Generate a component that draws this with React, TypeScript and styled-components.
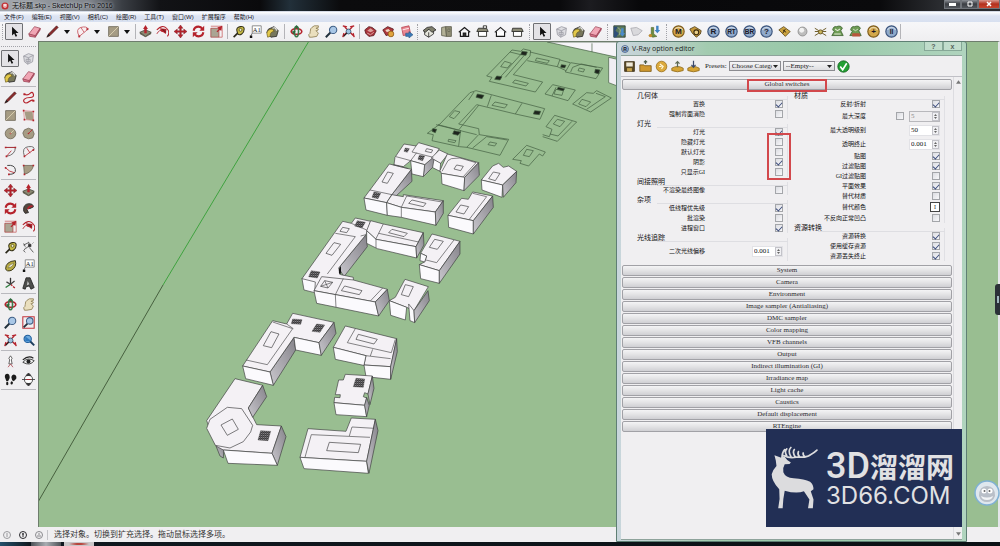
import React from "react";
import styled, { createGlobalStyle } from "styled-components";

const sans = '"Liberation Sans", "Noto Sans CJK SC", sans-serif';
const serif = '"Liberation Serif", "Noto Sans CJK SC", serif';

const GlobalStyle = createGlobalStyle`
  * { box-sizing: border-box; }
  body { margin: 0; overflow: hidden; font-family: ${sans}; color: #222; }
  button, input, select { font: inherit; color: inherit; margin: 0; padding: 0; }
`;

const Window = styled.div`
  position: relative;
  height: 100vh;
  display: flex;
  flex-direction: column;
  background: #f0eff1;
`;

/* ---------- title and menu ---------- */

const TitleBar = styled.header`
  height: 12px;
  flex: none;
  display: flex;
  align-items: center;
  gap: 3px;
  padding-left: 1px;
  border-bottom: 1px solid #d5dbe6;
  background: linear-gradient(90deg, #a3a7ad 0, #7f848b 90px, #3a3e44 122px, #121316 160px, #0a0a0c 260px, #22303a 290px, #0b0b0d 340px, #0a0a0c 560px, #1c1c20 590px, #08080a 640px, #0a0a0c 880px, #2a2c30 940px);
`;

const Title = styled.h1`
  margin: 0;
  flex: 1;
  font-size: 7px;
  line-height: 10px;
  font-weight: 400;
  color: #0c0c0e;
  text-shadow: 0 0 3px #e4e8ee;
  white-space: nowrap;
`;

const WindowButtons = styled.div`
  display: flex;
  align-self: flex-start;
`;

const WindowButton = styled.button<{ $close?: boolean }>`
  width: ${(p) => (p.$close ? 22 : 17)}px;
  height: 9px;
  border: 1px solid #70747a;
  border-top: 0;
  display: grid;
  place-items: center;
  background: ${(p) =>
    p.$close ? "linear-gradient(#d99a90, #b3301d 50%, #c8452e)" : "linear-gradient(#8c9096, #3b3e43 50%, #53575d)"};
`;

const MenuBar = styled.nav`
  height: 10px;
  flex: none;
  display: flex;
  gap: 8px;
  padding-left: 4px;
  background: linear-gradient(#ffffff, #dde4f3 40%, #d8e0f0);
`;

const MenuItem = styled.button`
  border: 0;
  background: none;
  font-size: 6px;
  line-height: 9px;
  color: #16161c;
  white-space: nowrap;
`;

/* ---------- tool bars ---------- */

const ToolBar = styled.div`
  height: 19px;
  flex: none;
  display: grid;
  grid-template-columns: 5px 127px 6px 85px 8px 48px 10px 67px 7px 50px 9px 103px 8px 69px 10px 49px 10px 227px 5px;
  align-items: center;
  background: linear-gradient(#f7f7f9, #efeef0);
`;

const Tools = styled.div`
  display: flex;
  justify-content: space-between;
  align-items: center;
`;

const Split = styled.div`
  display: flex;
  align-items: center;
  gap: 2px;
`;

const Tool = styled.button<{ $active?: boolean }>`
  width: ${(p) => (p.$active ? 18 : 14)}px;
  height: ${(p) => (p.$active ? 17 : 14)}px;
  border: ${(p) => (p.$active ? "1px solid #6f7074" : "0")};
  border-radius: 1px;
  background: ${(p) => (p.$active ? "#e3e2e6" : "none")};
  display: grid;
  place-items: center;
  svg { display: block; width: 13px; height: 13px; }
`;

const CaretButton = styled.button`
  width: 10px;
  height: 14px;
  border: 0;
  background: none;
  display: grid;
  place-items: center;
`;

const Divider = styled.span`
  justify-self: center;
  width: 1px;
  height: 15px;
  background: #b4b4b8;
`;

const Grip = styled.span`
  justify-self: center;
  width: 1px;
  height: 16px;
  border-left: 1px dotted #a2a2a8;
`;

const Main = styled.div`
  flex: 1;
  min-height: 0;
  display: flex;
`;

const Palette = styled.aside`
  width: 38px;
  flex: none;
  padding: 5px 2px 0 1px;
`;

const PaletteGrip = styled.div`
  height: 2px;
  border-top: 1px dotted #a2a2a8;
`;

const PaletteGroup = styled.div`
  display: grid;
  grid-template-columns: 18px 18px;
  grid-auto-rows: 14px;
  row-gap: 4px;
  padding: 3px 0;
  place-items: center;
  border-bottom: 1px solid #b9b9be;
`;

const Viewport = styled.main`
  flex: 1;
  min-width: 0;
  border: solid #6e7d6d;
  border-width: 1px 0 0 1px;
  border-right: 2px solid #e4e6ea;
  background: #99be91;
  svg { display: block; width: 100%; height: 100%; }
`;

const StatusBar = styled.footer`
  height: 15px;
  flex: none;
  display: flex;
  align-items: center;
  gap: 6px;
  padding-left: 2px;
  font-size: 8px;
  line-height: 12px;
  color: #333;
  svg { width: 10px; height: 10px; }
`;

const StatusIcons = styled.div`
  display: flex;
  gap: 6px;
  padding-right: 3px;
  height: 10px;
  border-right: 1px solid #c4c4c8;
`;

const TaskBar = styled.div`
  height: 4px;
  flex: none;
  display: flex;
  gap: 3px;
  padding-left: 31px;
  background: linear-gradient(90deg, #24506b, #10181f 30px, #0b1014);
`;

const Task = styled.span<{ $lit?: boolean }>`
  width: 30px;
  background: ${(p) => (p.$lit ? "radial-gradient(#b8453c 20%, #c9c6c8 50%)" : "linear-gradient(90deg, #4d5257, #a9adb2, #4d5257)")};
`;

/* ---------- options dialog ---------- */

const Dialog = styled.section`
  position: absolute;
  top: 41px;
  right: 33px;
  bottom: 4px;
  width: 351px;
  display: flex;
  flex-direction: column;
  padding: 0 4px 1px;
  border: 1px solid #5f7f74;
  border-radius: 3px 3px 0 0;
  background: linear-gradient(90deg, #c9d6dc, #b9cfc8 50px, #a3cbb0 90px, #98c8a8 200px, #b0d4be);
  font-family: ${serif};
  font-size: 7px;
  line-height: 9px;
`;

const DialogTitle = styled.div`
  height: 13px;
  flex: none;
  display: flex;
  justify-content: space-between;
`;

const DialogName = styled.h2`
  margin: 0;
  display: flex;
  align-items: center;
  gap: 3px;
  font: 400 7px/12px "Open Sans", ${sans};
  color: #1c2622;
`;

const DialogButton = styled.button`
  width: 19px;
  height: 9px;
  border: 1px solid #86a897;
  border-top: 0;
  background: rgba(255, 255, 255, 0.25);
  font: 700 7px/7px ${sans};
  color: #56635c;
`;

const Client = styled.div`
  flex: 1;
  min-height: 0;
  display: flex;
  flex-direction: column;
  background: #f0eff1;
  border: 1px solid #8ea39b;
  border-width: 1px 0;
`;

const DialogTools = styled.div`
  height: 21px;
  flex: none;
  display: flex;
  align-items: center;
  gap: 2px;
  padding-left: 1px;
  border-bottom: 1px solid #c0c0c6;
  label { padding-left: 3px; }
`;

const SelectBox = styled.span`
  display: grid;
  align-items: center;
  svg, select { grid-area: 1 / 1; }
  svg { justify-self: end; margin-right: 3px; pointer-events: none; }
`;

const Select = styled.select`
  appearance: none;
  width: 52px;
  height: 10px;
  padding: 0 8px 0 2px;
  border: 1px solid #8b8b90;
  background: linear-gradient(#f6f6f7, #dddde0);
  line-height: 8px;
`;

const ScrollArea = styled.div`
  flex: 1;
  min-height: 0;
  display: grid;
  grid-template-columns: 1fr 9px;
`;

const Accordion = styled.div`
  display: flex;
  flex-direction: column;
  gap: 1px;
  padding: 2px 1px 0;
`;

const SectionButton = styled.button`
  position: relative;
  height: 11px;
  flex: none;
  border: 1px solid #a1a1a6;
  border-radius: 2px;
  background: linear-gradient(#f4f4f5, #e3e3e5 50%, #cfcfd3);
  color: #2c2c30;
  line-height: 9px;
`;

const HeaderMark = styled.span`
  position: absolute;
  left: 50%;
  top: -1px;
  width: 80px;
  height: 13px;
  margin-left: -40px;
  border: 2px solid #d2484c;
`;

const CheckMark = styled.span`
  position: absolute;
  right: -3px;
  top: 6px;
  width: 24px;
  bottom: -3px;
  border: 2px solid #d2484c;
  pointer-events: none;
`;

const ScrollBar = styled.div`
  display: flex;
  flex-direction: column;
  justify-content: space-between;
  align-items: center;
  border-left: 1px solid #dcdce0;
  padding: 3px 0;
  svg { width: 5px; height: 4px; }
`;

const Switches = styled.div`
  display: grid;
  grid-template-columns: 157px 153px;
  column-gap: 4px;
  padding: 2px 0 3px 9px;
`;

const Column = styled.div`
  display: flex;
  flex-direction: column;
  gap: 2px;
`;

const Group = styled.fieldset`
  position: relative;
  margin: 0;
  padding: 0;
  border: 0;
  min-width: 0;
  background:
    linear-gradient(#dedee2, #dedee2) 26px 3px / 100% 1px no-repeat,
    linear-gradient(#e0e0e4, #e0e0e4) right bottom / 1px 100% no-repeat;
`;

const Legend = styled.legend<{ $inset: number }>`
  height: 6px;
  padding: 0;
  margin-left: ${(p) => p.$inset}px;
  line-height: 6px;
  font-size: 7px;
  color: #111;
`;

const Row = styled.div<{ $h: number }>`
  height: ${(p) => p.$h}px;
  display: grid;
  grid-template-columns: 74px 1fr;
  align-items: center;
  padding-right: 5px;
  label {
    justify-self: end;
    font-size: 6px;
    line-height: 8px;
    white-space: nowrap;
    color: #111;
  }
`;

const Controls = styled.div`
  display: flex;
  justify-content: flex-end;
  align-items: center;
  gap: 5px;
`;

const Check = styled.input`
  appearance: none;
  width: 8px;
  height: 8px;
  border: 1px solid #a4a6aa;
  background: linear-gradient(135deg, #dcdde2, #f8f8fa);
  display: grid;
  place-items: center;
  &:checked::after {
    content: "";
    width: 5px;
    height: 3px;
    border: solid #3c4c7c;
    border-width: 0 0 1px 1px;
    transform: rotate(-48deg);
  }
`;

const Spin = styled.div<{ $off?: boolean }>`
  width: 31px;
  height: 11px;
  display: flex;
  border: 1px solid ${(p) => (p.$off ? "#b8b8bc" : "#e2e2e6")};
  background: ${(p) => (p.$off ? "#eeedef" : "#fff")};
  color: ${(p) => (p.$off ? "#888" : "#111")};
  input {
    flex: 1;
    min-width: 0;
    width: 10px;
    border: 0;
    padding-left: 1px;
    background: none;
    line-height: 9px;
  }
`;

const Stepper = styled.button`
  width: 7px;
  border: 1px solid #c3c3c9;
  background: #f0f0f3;
  display: grid;
  place-items: center;
  svg { width: 5px; height: 7px; display: block; }
`;

const Swatch = styled.button`
  width: 10px;
  height: 10px;
  border: 1px solid #444;
  background: #fff;
  font-size: 6px;
  line-height: 6px;
`;

/* ---------- floating badges ---------- */

const Watermark = styled.div`
  position: absolute;
  right: 38px;
  bottom: 19px;
  width: 196px;
  height: 98px;
  display: flex;
  align-items: center;
  gap: 7px;
  padding-left: 5px;
  background: #222f55;
  color: #e1e1e3;
  svg { width: 48px; height: 66px; flex: none; }
`;

const BrandText = styled.div`
  display: flex;
  flex-direction: column;
  white-space: nowrap;
`;

const BrandName = styled.div`
  display: flex;
  align-items: center;
  height: 36px;
  font: 700 28px/36px "Noto Sans CJK SC", sans-serif;
  b { font: 500 36px/36px Roboto, sans-serif; }
`;

const BrandUrl = styled.div`
  font: 400 24px/24px Inter, sans-serif;
`;

const Mascot = styled.div`
  position: absolute;
  right: 0;
  bottom: 40px;
  width: 26px;
  height: 26px;
  svg { display: block; }
`;

const SideTab = styled.div`
  position: absolute;
  right: 0;
  top: 284px;
  width: 5px;
  height: 31px;
  border-radius: 3px 0 0 3px;
  background: #2b3138;
  display: grid;
  place-items: center;
  &::after { content: ""; width: 2px; height: 7px; background: #9fb6bd; }
`;

/* ---------- icons ---------- */

const RED = "#b5232c";
const TAN = "#a69c84";
const DK = "#2b2a2a";

const Ball = ({ c, t }: { c: [string, string]; t: string }) => (
  <>
    <circle cx="8" cy="8" r="7" fill={c[0]} stroke={c[1]} strokeWidth="1.4" />
    <path d="M3 6a5.5 5.5 0 0 1 10 0" stroke="#fff" strokeOpacity=".5" strokeWidth="1.5" fill="none" />
    <text x="8" y="11.3" textAnchor="middle" fontSize={t.length > 1 ? 8 : 10} fontWeight="700" fill="#1c1a26" fontFamily="Liberation Sans">{t}</text>
  </>
);
const GOLD: [string, string] = ["#d3a84a", "#7e5c1c"];
const BLUE: [string, string] = ["#8fa9cb", "#3c557d"];

const icons: Record<string, React.ReactNode> = {
  select: <path d="M5 2v11l2.6-2.4L9.4 14.500l1.900-.9-1.900-3.700H13z" fill="#111" />,
  component: <g fill="#dcdce0" stroke="#9a9aa2"><path d="M2 5l6-3 6 2-1 8-6 3-4-3z" /><path d="M2 5l6 2 6-3M8 7l-1 8M5 9h5v3H5z" fill="none" /></g>,
  paint: <g><path d="M3 5l7-3 5 5-2 7-7 1-5-6z" fill="#77775c" stroke={DK} /><path d="M1 10q1-5 7-5l2 3q-5 0-5 6l-3 1z" fill="#e2c84a" stroke="#67591c" strokeWidth=".8" /><path d="M8 4q4-2 5 3" stroke="#eee" fill="none" strokeWidth="1.300" /></g>,
  eraser: <g stroke="#9b4657" strokeWidth=".9"><path d="M1 11l7-9 7 2-6 10z" fill="#f0a5b4" /><path d="M1 11l8 2v2l-7-1z" fill="#d67388" /><path d="M9 13l6-9v2l-6 9z" fill="#c65f76" /></g>,
  pencil: <g><path d="M1 15l2-4L13 1l2 2L5 13z" fill="#8b2a2a" stroke="#3e1b1b" strokeWidth=".7" /><path d="M1 15l2-4 2 2z" fill="#1e1e1e" /></g>,
  freehand: <g fill="none" stroke={RED} strokeWidth="1.400"><path d="M3 4q4 2 7-1t4 1-4 4-7 2 0 4 6-1 5-1" /><path d="M2 3h2v2H2zM13 11h2v2h-2z" fill={RED} strokeWidth=".5" /></g>,
  rect: <g><path d="M2 2h12v12H2z" fill={TAN} stroke="#6e6857" /><path d="M2 14L14 2" stroke="#e3d7b8" /></g>,
  rotrect: <g><path d="M3 3h10l1 11-9-1z" fill={TAN} /><path d="M2 2l12 1v12M2 2l1 11 11 1" stroke="#d07a7a" fill="none" strokeWidth=".8" /><path d="M1 1h2v2H1zM13 2h2v2h-2zM13 13h2v2h-2zM2 12h2v2H2z" fill={RED} /></g>,
  circle: <g><circle cx="8" cy="8" r="6.500" fill={TAN} stroke="#6e6857" /><circle cx="8" cy="8" r="1" fill={RED} /><path d="M8 8l4-4" stroke="#e8dcb8" /></g>,
  polygon: <g><path d="M8 1.500l5 2 2 5-2 5-5 1-5-2-2-5 2-4z" fill={TAN} stroke="#6e6857" /><path d="M8 8l5-5" stroke={RED} /><circle cx="8" cy="8" r="1" fill={RED} /></g>,
  arc: <g fill="none"><path d="M2 3h12Q14 12 3 14" stroke="#555" /><path d="M2 3h12M3 14l6-7" stroke={RED} /><path d="M1 2h2v2H1zM13 2h2v2h-2zM2 13h2v2H2z" fill={RED} /></g>,
  arc2: <g fill="none"><path d="M3 14Q-1 3 8 2t6 5" stroke="#555" /><path d="M3 14L14 6M6 4l4 6" stroke={RED} /><path d="M2 13h2v2H2zM13 5h2v2h-2z" fill={RED} /></g>,
  arcBar: <g fill="none" stroke="#c45059"><path d="M4 14Q-1 5 6 3t9 2z" fill="#f8eef0" /><path d="M6 3l4 6" /><path d="M3 13h2v2H3zM13 4h2v2h-2z" fill={RED} strokeWidth=".4" /></g>,
  arc3: <g fill="none"><path d="M4 3q9-1 10 5t-8 6" stroke="#444" strokeWidth="1.200" /><path d="M2 6l5 4 6 2" stroke={RED} /><path d="M1 5h2v2H1zM5 13h2v2H5z" fill={RED} /></g>,
  pie: <g><path d="M2 3h12q-1 8-11 11z" fill={TAN} stroke="#6e6857" /><path d="M1 2h2v2H1zM13 2h2v2h-2zM2 13h2v2H2z" fill={RED} /></g>,
  move: <g fill={RED} stroke="#7b161d" strokeWidth=".5"><path d="M8 0l3 4H9v3h3V5l4 3-4 3V9H9v3h2l-3 4-3-4h2V9H4v2L0 8l4-3v2h3V4H5z" /></g>,
  push: <g><path d="M1 9l7-3 7 3-7 5z" fill="#8c8a72" stroke="#45453a" /><path d="M1 9v2l7 4 7-4V9l-7 5z" fill="#5f5d4c" /><path d="M8 0l3 5H9.500v5h-3V5H5z" fill={RED} /></g>,
  rotate: <g fill="none" stroke={RED} strokeWidth="2.600"><path d="M2 7q1-5 6-5 3 0 5 3M14 9q-1 5-6 5-3 0-5-3" /><path d="M15 1v6H9zM1 15V9h6z" fill={RED} stroke="none" /></g>,
  follow: <g><path d="M2 11Q1 3 8 2q6 0 6 4l-4 2q-3-1-4 1l2 4-4 1z" fill="#54483f" stroke="#222" /><path d="M7 9q1-4 6-4" stroke={RED} strokeWidth="2" fill="none" /></g>,
  scale: <g><path d="M1 4h10v11H1z" fill="#aaa593" stroke="#a33" strokeWidth=".8" /><path d="M1 1.500h14V15h-4" fill="none" stroke="#cc6a6a" /><path d="M8 8l3-3-2-2 6-2-1 6-2-1-3 3z" fill={RED} /></g>,
  offset: <g fill="none"><path d="M1 6Q8-1 13 4t1 10" stroke={RED} strokeWidth="1.300" /><path d="M1 11q3-6 8-4" stroke={RED} /><path d="M5 4l8 1-1 6-3-2-3-1z" fill={RED} /><path d="M8 5l4 4" stroke="#3a1a1a" /></g>,
  tape: <g><path d="M6 7q-1-4 4-5t5 3-3 6-5 0z" fill="#c8bb45" stroke="#37331a" strokeWidth="1.300" /><circle cx="10.500" cy="6" r="1.800" fill="#f5f2d3" stroke="#55511e" /><path d="M7 10l-5 5" stroke="#2a281a" strokeWidth="2" /></g>,
  dim: <g stroke="#444" fill="none"><path d="M2 5l6-3M2 3l2 4M8 1l1 3M5 9l6-5M9 8l5 6M4 14l-2-2 3-4" /><path d="M8 4h3v3H8zM13 3l1-1" fill={DK} /></g>,
  protractor: <g><path d="M2 12Q2 3 14 2q2 8-5 12-6 2-7-2z" fill="#b7aa43" stroke="#39351a" strokeWidth="1.200" /><path d="M5 11q1-4 7-6-1 5-7 6z" fill="#f2f0e6" stroke="#6d6629" strokeWidth=".7" /></g>,
  text: <g><path d="M4 1h11v9H4z" fill="#fff" stroke="#777" /><path d="M4 10l-2 4" stroke="#555" /><path d="M1 13h3v3H1z" fill="#111" /><text x="9.500" y="8.500" textAnchor="middle" fontSize="8" fontFamily="Liberation Serif" fill="#222">A1</text></g>,
  axes: <g strokeWidth="1.600" fill="none"><path d="M8 9V1" stroke="#333" /><path d="M8 9l6 5" stroke={RED} strokeDasharray="3 1" /><path d="M8 9l-6 4" stroke="#2a7a3a" /><path d="M3 6l5 3 5-4" stroke="#444" /></g>,
  text3d: <g><path d="M5 1l5 0 5 12-4 2-2-4-4 1-1 3-3-1z" fill="#4e4e4c" stroke="#222" /><path d="M7 5l2 4-3 1z" fill="#ccc" /></g>,
  orbit: <g fill="none" strokeWidth="2"><ellipse cx="8" cy="8" rx="6.500" ry="3.500" stroke={RED} /><ellipse cx="8" cy="8" rx="2.500" ry="6.500" stroke="#3c7a4b" /><path d="M8 0l3 4H6zM2 8l5-1-2 5z" fill="#2f6a3d" stroke="none" /></g>,
  pan: <path d="M2 12q2-1 2-4 0-4 2-5l3-2 5 0 0 2-3 1 3 1-1 2-2 0 3 3-2 4-6 1-3 0z" fill="#eadfbe" stroke="#8d7d50" />,
  zoom: <g><path d="M7 9l-6 6" stroke="#22303c" strokeWidth="2.400" /><circle cx="10" cy="6" r="4.500" fill="#a9c7e6" stroke="#3f5f86" strokeWidth="1.300" /></g>,
  zoomwin: <g><path d="M1 1h14v14H1z" fill="none" stroke="#c2353d" strokeWidth="1.300" /><path d="M7 9l-5 5" stroke="#22303c" strokeWidth="2.200" /><circle cx="9.500" cy="6" r="4" fill="#a9c7e6" stroke="#3f5f86" strokeWidth="1.300" /></g>,
  extents: <g><path d="M1 1l4 1-1 1 3 3M15 1l-4 1 1 1-3 3M1 15l1-4 1 1 4-4M15 15l-1-4-1 1-4-4" stroke={RED} strokeWidth="1.600" fill={RED} /><circle cx="8" cy="8" r="3" fill="#9cc1dd" stroke="#32536f" /><path d="M6 10l-4 4" stroke="#222" strokeWidth="1.500" /></g>,
  prev: <g><circle cx="7" cy="6" r="4.500" fill="#6fa9dc" stroke="#1f5d9c" strokeWidth="1.300" /><path d="M10 9l5 5" stroke="#1c3c5c" strokeWidth="2.400" /><path d="M4 9l0-6 8 6z" fill="#2f79bf" /></g>,
  position: <g fill="none" stroke="#b34952"><path d="M8 1l2 3-1 2 1 5H6l1-5-1-2z" fill="#fff" stroke="#333" strokeWidth=".9" /><path d="M5 15l3-4 3 4" /></g>,
  look: <g><path d="M1 9q6-7 14-2-5 7-14 2z" fill="#f0f0f0" stroke="#222" /><circle cx="8" cy="8" r="2.500" fill="#222" /><path d="M1 6q7-6 13-2" stroke="#222" strokeWidth="1.600" fill="none" /></g>,
  walk: <g fill="#1b1b1b"><path d="M1 5q0-4 3-4t3 5l-2 4H3z" /><path d="M3 11l2 0q1 4-1 4t-1-4z" /><path d="M9 5q1-4 4-3t2 5l-3 3-2-1z" /><path d="M9 10l2 1q0 4-2 3t0-4z" /></g>,
  section: <g fill="#fff" stroke="#333"><circle cx="8" cy="8" r="5" /><path d="M0 8h16M5 3l3-3 3 3zM5 13l3 3 3-3z" fill="#333" /><path d="M5 8h6" stroke={RED} /></g>,
  get: <g><path d="M1 6l5-4 4 1 5 4-3 6-6 1-4-4z" fill="#a8333a" stroke="#571a1e" /><path d="M4 7l4-3 4 3-4 2z" fill="#dda19c" /><path d="M4 10l4 2 4-3" stroke="#e7c0b9" /></g>,
  share: <g><path d="M1 6l6-4 7 3-2 6-7 2z" fill="#b0383c" stroke="#571a1e" /><circle cx="11" cy="11" r="3.500" fill="#e2a43c" stroke="#8d5b18" /><path d="M4 6l4-1 2 2-4 2z" fill="#eed6c2" /></g>,
  send: <g><path d="M2 3l9-2 2 10-9 2z" fill="#e98893" stroke="#b8404e" /><path d="M7 10h4V8l5 4-5 4v-2H7z" fill="#3c79b6" stroke="#1e4a78" strokeWidth=".6" /><path d="M3 6l8-2" stroke="#fff" /></g>,
  iso: <g stroke={DK} fill="#e6e6dc"><path d="M2 8v4l5 3 6-4V7l-5-2z" /><path d="M0 7l5-4 6-1 5 4-5 3-4-4-4 4z" fill="#7f7f6d" /><path d="M7 9v6" /></g>,
  top: <g stroke="#5c5c4b"><path d="M2 3l5-1 1 12-6-1z" fill="#b3b197" /><path d="M7 2h7v12H8z" fill="#8f8d75" /><path d="M10 5h2v3h-2z" fill="#d6d4bb" /></g>,
  front: <g fill="#fff" stroke="#1c1c1c" strokeWidth="1.500"><path d="M3 8v6h10V8" /><path d="M1 9l7-6 7 6" fill="none" /><path d="M6.500 14v-4h3v4" fill="#333" /></g>,
  right: <g fill="#fff" stroke="#3b3b36" strokeWidth="1.200"><path d="M3 8h10v6H3z" /><path d="M1 8l2-4h10l2 4z" fill="#8c8b77" /><path d="M9 1h4v3H9z" /></g>,
  back: <g fill="#fff" stroke="#1c1c1c" strokeWidth="1.400"><path d="M3 8v6h10V8" /><path d="M1 9l7-6 7 6" fill="none" /></g>,
  left: <g fill="#fff" stroke="#3b3b36" strokeWidth="1.200"><path d="M3 8h10v6H3z" /><path d="M1 8l1-4h11l2 4z" fill="#8c8b77" /></g>,
  map: <g><path d="M1 1h14v14H1z" fill="#5d7a5c" stroke="#26382b" /><path d="M1 2h5l-3 5 4 3-3 5H1z" fill="#2f4f78" /><path d="M6 3l3 3-1 6" stroke="#b7c79c" fill="none" /><path d="M10 4h3v6h2l-3.500 4L8 10h2z" fill="#4b8bcb" /></g>,
  terrain: <path d="M1 4l7-1 7 4-5 5-6 1z" fill="#d9d9dc" stroke="#aaaab0" />,
  geo: <g><path d="M1 13l3-2V3h3v8l4 3-5 1z" fill="#6d8d3f" stroke="#4a5f28" strokeWidth=".7" /><path d="M10 1h3v5h2l-3.500 4L8 6h2z" fill="#4184c4" /><circle cx="3" cy="13" r="2" fill="#c78b2d" /></g>,
  m: <Ball c={GOLD} t="M" />,
  r: <Ball c={BLUE} t="R" />,
  rt: <Ball c={BLUE} t="RT" />,
  br: <Ball c={BLUE} t="BR" />,
  help: <Ball c={BLUE} t="?" />,
  plus: <Ball c={GOLD} t="+" />,
  pause: <Ball c={BLUE} t="II" />,
  gear: <g><path d="M1 5l6-3 8 5-1 4-5 4-5-5z" fill="#c69a3c" stroke="#4c3a14" /><circle cx="9" cy="9" r="3" fill="#e9cf8a" stroke="#3c2c10" strokeWidth="1.400" /></g>,
  tag: <g><path d="M1 6l6-4 8 6-6 6z" fill="#cda43f" stroke="#5c4718" /><path d="M6 6l4 3M9 5l-3 5" stroke="#3a2b10" strokeWidth="1.200" /></g>,
  sphere: <g><circle cx="8" cy="8" r="5.500" fill="#bdbdbd" stroke="#8b8b8b" /><circle cx="7" cy="6.500" r="3" fill="#f2f2f2" /></g>,
  light: <g stroke="#6e5d2a" strokeWidth="1.200"><path d="M1 4l5 3M15 4l-5 3M1 13l5-3M15 13l-5-3M1 8h14" /><circle cx="8" cy="8.500" r="2.500" fill="#c9b55a" /></g>,
  tree: <g><path d="M2 6q1-5 5-4 5-2 7 2l-2 3 3 6H1l3-5z" fill="#6e9c55" stroke="#3f6431" /><path d="M5 5l3 2 3-2M4 11h8" stroke="#e3ead8" strokeWidth="1.300" fill="none" /></g>,
  treeRed: <g><path d="M2 6q1-5 5-4 5-2 7 2l-2 3 3 6H1l3-5z" fill="#6e9c55" stroke="#3f6431" /><path d="M5 5l3 2 3-2" stroke="#e3ead8" fill="none" /><path d="M4 10h9l1 4H4z" fill="#b9553c" /></g>,
  save: <g><path d="M2 2h12v12H2z" fill="#5b4a24" stroke="#3b2f15" /><path d="M4 3h8v5H4z" fill="#efe9d8" /><path d="M5 10h6v4H5z" fill="#c9a44c" /></g>,
  open: <g><path d="M1 6h5l1 1h8v7H1z" fill="#d0982f" stroke="#7d5a17" /><path d="M8 5V1M6 3l2-2 2 2" stroke="#4b5c49" strokeWidth="1.500" fill="none" /></g>,
  reset: <g><circle cx="8" cy="8" r="6.500" fill="#dba93c" stroke="#9a701c" /><path d="M6 5l4 3-2 3M5 8h3" stroke="#fff6da" strokeWidth="1.500" fill="none" /></g>,
  up: <g><path d="M1 10q7-4 14 0v3q-7 3-14 0z" fill="#d6a535" stroke="#8f6919" /><path d="M8 9V2M5.500 4.500L8 2l2.500 2.500" stroke="#5f6a52" strokeWidth="1.500" fill="none" /></g>,
  down: <g><path d="M1 10q7-4 14 0v3q-7 3-14 0z" fill="#d6a535" stroke="#8f6919" /><path d="M8 1v7M5.500 6L8 9l2.500-3" stroke="#3c4a6a" strokeWidth="1.500" fill="none" /></g>,
  ok: <g><circle cx="8" cy="8" r="7" fill="#23a033" stroke="#145e1e" /><path d="M4 8l3 4 5-8" stroke="#fff" strokeWidth="2" fill="none" /></g>,
  logo: <g><circle cx="8" cy="8" r="7" fill="#c32f33" /><path d="M4 6l4-2 4 2-4 2zM4 9l4 2 4-2" fill="#fff" stroke="#fff" /></g>,
};

const Icon = ({ n, s = 14 }: { n: string; s?: number }) => (
  <svg viewBox="0 0 16 16" width={s} height={s} fill="none" aria-hidden="true">{icons[n]}</svg>
);

const ToolSet = ({ names, active }: { names: string[]; active?: string }) => (
  <>
    {names.map((n, i) => (
      <Tool key={n + i} $active={n === active} aria-label={n}><Icon n={n} /></Tool>
    ))}
  </>
);

const Caret = () => (
  <CaretButton aria-label="more">
    <svg width="6" height="4" viewBox="0 0 6 4"><path d="M0 0h6L3 4z" fill="#111" /></svg>
  </CaretButton>
);

/* ---------- model ---------- */

/* Face kinds: t roof, f lit wall, s shaded wall, n closed outline, l open line, k hatched block */
type Face = [string, string];
const fills: Record<string, string> = { t: "#f4f1f5", f: "#fbfafd", s: "url(#shade)", n: "none", k: "url(#hatch)" };
const Faces = ({ list }: { list: Face[] }) => (
  <>
    {list.map(([kind, pts], i) =>
      kind === "l" ? (
        <polyline key={i} points={pts} fill="none" stroke="#4a4a4c" strokeWidth={2} />
      ) : (
        <polygon key={i} points={pts} fill={fills[kind]} stroke={kind === "k" ? "#333" : "#3c3c3e"} strokeWidth={kind === "k" ? 1 : 2} />
      )
    )}
  </>
);

const lower: Face[] = [
  ["s", "240,216 312,112 317,150 250,256"],
  ["t", "158,198 248,62 290,72 308,40 432,67 387,128 312,112 240,216"],
  ["f", "158,198 240,216 250,256 167,236"],
  ["f", "312,112 387,128 394,166 317,150"],
  ["s", "387,128 432,67 438,100 394,166"],
  ["l", "168,180 232,194 308,86 248,66"],
  ["l", "290,72 310,86"],
  ["n", "243,95 267,102 245,143 220,137"],
  ["k", "380,72 404,75 390,97 366,94"],
  ["k", "308,57 336,59 332,73 304,71"],
  ["t", "430,142 466,78 620,116 602,200 522,195 528,167"],
  ["f", "430,142 528,167 522,196 520,196 436,178"],
  ["f", "522,195 602,200 602,238 528,230"],
  ["s", "602,200 620,116 622,155 602,238"],
  ["l", "496,86 472,128 604,158 616,118"],
  ["l", "528,167 602,176"],
  ["l", "548,148 541,168"],
  ["n", "505,103 562,118 552,132 498,118"],
  ["t", "432,308 434,292 450,293 451,284 436,284 446,240 460,240 466,223 547,228 534,282 524,278 520,290 530,294 524,316"],
  ["f", "432,308 524,316 530,350 438,344"],
  ["s", "524,316 530,292 538,316 530,350"],
  ["s", "534,282 547,228 552,265 540,314"],
  ["k", "498,235 524,237 520,262 490,260"],
  ["t", "330,472 354,386 468,394 484,354 556,358 530,484"],
  ["f", "330,472 530,484 535,520 342,506"],
  ["s", "530,484 556,358 564,392 537,520"],
  ["l", "345,472 364,404 540,412"],
  ["l", "478,408 486,381 552,385"],
  ["n", "418,427 512,433 505,458 410,452"],
  ["s", "78,438 102,440 100,474 90,468"],
  ["t", "50,362 135,236 218,256 175,324 200,374 274,378 246,460 100,450 78,438"],
  ["s", "218,256 230,290 188,352 175,324"],
  ["s", "274,378 288,410 262,496 246,460"],
  ["f", "100,450 246,460 262,496 114,490"],
  ["t", "60,358 112,322 155,326 188,376 182,396 160,425 120,444 76,436 50,385"],
  ["n", "93,375 127,357 145,388 112,406"],
  ["k", "212,392 242,394 234,422 204,420"],
];

const middle: Face[] = [
  ["s", "364,118 366,154 318,198 304,196"],
  ["f", "424,84 452,98 450,124 426,112"],
  ["s", "404,104 434,76 428,112 400,140"],
  ["t", "315,82 342,42 378,48 386,38 448,56 430,82 404,104 362,92 340,110 312,104"],
  ["t", "424,84 448,60 474,72 452,100"],
  ["f", "362,92 404,104 400,140 366,132"],
  ["l", "378,48 366,66 430,82"],
  ["l", "362,92 380,68"],
  ["l", "318,80 348,88 362,92"],
  ["k", "388,76 404,78 398,92 384,88"],
  ["k", "346,54 358,56 352,67 342,64"],
  ["n", "410,56 428,60 424,68 406,64"],
  ["t", "222,204 298,102 364,118 304,196 290,218"],
  ["f", "222,204 290,218 292,256 228,240"],
  ["l", "240,180 306,194"],
  ["l", "308,104 355,116"],
  ["n", "293,126 310,130 292,160 276,156"],
  ["k", "252,186 272,190 264,206 246,202"],
  ["t", "290,218 306,194 340,200 340,194 460,212 436,246 334,232"],
  ["f", "290,218 334,232 436,246 438,286 334,262 292,256"],
  ["s", "436,246 460,212 460,250 438,286"],
  ["l", "334,262 334,232 350,198 456,216"],
  ["n", "366,210 408,220 400,230 356,220"],
  ["t", "450,122 472,72 566,98 524,142 454,130"],
  ["f", "454,130 524,142 522,182 456,162"],
  ["s", "524,142 566,98 568,136 522,182"],
  ["l", "456,124 474,92 484,86 510,84 558,98 520,140"],
  ["n", "500,105 520,109 512,122 492,117"],
  ["t", "574,150 608,108 626,100 640,112 656,108 680,124 638,165"],
  ["f", "574,150 638,165 636,202 576,180"],
  ["s", "638,165 680,124 678,158 640,202"],
  ["n", "610,126 630,130 616,152 596,146"],
  ["t", "474,256 515,205 535,208 548,186 608,198 550,272"],
  ["f", "474,256 550,272 550,312 476,292"],
  ["s", "550,272 608,198 610,232 550,312"],
  ["l", "538,268 590,200 548,190"],
  ["n", "512,225 536,230 522,252 498,246"],
  ["s", "228,314 232,350 162,440 146,414"],
  ["t", "36,446 158,274 184,280 196,264 242,274 228,314 146,414 152,434 190,442 190,452 95,484 72,484"],
  ["f", "36,446 76,456 74,488 42,480"],
  ["l", "136,310 196,320 112,432"],
  ["l", "184,280 230,300"],
  ["l", "212,318 228,314"],
  ["n", "132,338 152,343 126,376 108,370"],
  ["k", "64,422 90,426 82,444 56,440"],
  ["k", "202,272 226,277 216,294 194,288"],
  ["n", "158,292 178,296 170,308 150,304"],
  ["t", "72,482 95,440 190,450 292,478 256,516"],
  ["f", "72,482 256,516 266,558 80,520"],
  ["s", "256,516 292,478 298,512 266,558"],
  ["l", "138,532 136,494 160,446"],
  ["l", "242,512 278,474"],
  ["n", "164,468 216,482 208,494 154,482"],
  ["n", "104,452 128,457 114,474 92,469"],
  ["l", "104,452 114,474"],
  ["l", "128,457 92,469"],
  ["t", "230,302 242,272 280,282 400,308 378,350 258,328"],
  ["f", "230,302 258,328 378,350 380,384 262,356 230,340"],
  ["s", "378,350 400,308 402,345 380,384"],
  ["l", "258,354 258,326 280,282"],
  ["l", "266,310 386,336"],
  ["n", "306,298 352,310 342,320 296,308"],
  ["t", "388,404 404,396 410,378 392,370 426,312 510,334 448,422"],
  ["f", "388,404 448,422 448,460 392,446"],
  ["f", "392,370 410,378 404,396 390,392"],
  ["s", "448,422 510,334 510,372 448,460"],
  ["l", "408,390 440,398 492,330"],
  ["n", "434,328 460,334 442,358 418,352"],
  ["t", "298,512 316,502 345,448 415,470 372,542 350,532"],
  ["f", "298,512 350,532 346,570 302,556"],
  ["f", "356,522 372,542 374,578 360,572"],
  ["s", "372,542 414,482 418,512 374,578"],
  ["n", "346,464 370,470 356,500 334,494"],
];

const flat = [
  "200,108 276,30 302,34 310,27 332,32 330,48 280,104 368,126 346,156 208,124 216,112 200,108",
  "330,36 420,58 412,80 322,62", "436,96 452,68 548,84 528,116 436,96", "412,80 438,92", "420,60 450,68", "452,96 458,82 484,72 530,82",
  "240,112 302,44 270,36", "256,112 318,40", "254,64 274,70 262,84 242,80 254,64", "350,54 388,62 382,70 346,62 350,54", "478,84 494,88 490,96 474,92 478,84",
  "285,120 325,130 318,138 278,128 285,120", "375,162 398,134 466,150 444,182 375,162", "408,148 430,152 426,166 402,162 408,148", "396,168 408,142",
  "458,192 500,158 520,160 530,152 574,174 512,216 458,192", "500,208 556,170 528,160", "486,178 512,186 498,200 476,192 486,178",
  "22,280 60,252 150,158 168,152 374,206 360,238 286,222 170,194 116,252 176,266 178,284 266,298 240,346 140,322 118,320 36,302 40,284 22,280",
  "146,180 162,156", "202,200 214,166", "286,222 306,190", "54,254 116,270 176,196", "48,254 170,284", "122,270 116,318", "104,212 120,216 102,236 88,230 104,212",
  "225,186 262,194 254,204 216,196 225,186", "140,322 176,284", "158,324 200,290 262,300", "210,306 230,310 224,318 204,314 210,306",
  "368,284 388,290 396,268 378,260 404,226 470,246 412,304 368,290", "390,282 414,288 456,244", "412,238 434,244 420,260 400,252 412,238",
  "278,358 320,316 376,336 368,348 358,342 326,378 300,370 304,362 278,358", "320,328 340,332 328,350 310,346 320,328",
];
const blocks = ["306,34 322,36 318,46 302,44", "230,108 246,110 240,120 224,118", "424,74 438,76 434,84 422,82", "526,88 540,90 536,102 524,98", "172,162 192,166 186,176 168,172", "344,212 362,214 358,224 340,222", "102,272 122,276 114,286 98,282", "38,266 50,268 46,278 36,274", "414,142 434,146 430,152 412,148"];

const Model = () => (
  <svg viewBox="39 42 959 485" preserveAspectRatio="xMinYMin slice" role="img" aria-label="Model view">
    <defs>
      <linearGradient id="shade" x1="1" y1="0" x2="0" y2="1">
        <stop offset="0" stopColor="#85838a" />
        <stop offset="1" stopColor="#c9c7cd" />
      </linearGradient>
      <pattern id="hatch" width="6" height="6" patternUnits="userSpaceOnUse">
        <path d="M0 0h6v6H0z" fill="#858387" />
        <path d="M0 6L6 0M0 1h6" stroke="#1c1c1c" strokeWidth="1.600" />
      </pattern>
    </defs>
    <path d="M309 41L163 285" stroke="#3fa23f" />
    <path d="M163 285L38 502" stroke="#47603f" />
    <g transform="translate(420 40) scale(.3333)" fill="none" stroke="#3f5a3e" strokeWidth="2">
      {flat.map((p) => <polyline key={p} points={p} />)}
      {blocks.map((p) => <polygon key={p} points={p} fill="#1d241d" />)}
      <path d="M86 298l22 4-4 6-20-4z" />
      <path d="M382 6L592 52V6z" fill="#f6f4f8" />
      <path d="M516 10v26" />
      <path d="M566 52l26 6v80l-26-10z" fill="#f0eef3" />
    </g>
    <g transform="translate(290 130) scale(.3333)" strokeLinejoin="round"><Faces list={middle} /></g>
    <g transform="translate(190 300) scale(.3333)" strokeLinejoin="round"><Faces list={lower} /></g>
    <path d="M340 275q-3-5 1-9v6z" fill="#111" />
  </svg>
);

/* ---------- dialog content ---------- */

type Item = { label: string; on?: boolean; value?: string; off?: boolean; h?: number; swatch?: boolean };

const leftGroups: [string, Item[]][] = [
  ["几何体", [{ label: "置换", on: true }, { label: "强制背面消隐" }]],
  ["灯光", [{ label: "灯光", on: true }, { label: "隐藏灯光" }, { label: "默认灯光" }, { label: "阴影", on: true }, { label: "只显示GI" }]],
  ["间接照明", [{ label: "不渲染最终图像" }]],
  ["杂项", [{ label: "低线程优先级", on: true }, { label: "批渲染" }, { label: "进程窗口", on: true }]],
  ["光线追踪", [{ label: "二次光线偏移", value: "0.001", h: 20 }]],
];
const rightGroups: [string, Item[]][] = [
  ["材质", [
    { label: "反射/折射", on: true },
    { label: "最大深度", value: "5", off: true, h: 14 },
    { label: "最大透明级别", value: "50", h: 14 },
    { label: "透明终止", value: "0.001", h: 14 },
    { label: "贴图", on: true },
    { label: "过滤贴图", on: true },
    { label: "GI过滤贴图" },
    { label: "平面效果", on: true },
    { label: "替代材质" },
    { label: "替代颜色", swatch: true, h: 12 },
    { label: "不反向正常凹凸" },
  ]],
  ["资源转换", [{ label: "资源转换", on: true }, { label: "使用缓存资源", on: true }, { label: "资源丢失终止", on: true }]],
];
const sections = ["System", "Camera", "Environment", "Image sampler (Antialiasing)", "DMC sampler", "Color mapping", "VFB channels", "Output", "Indirect illumination (GI)", "Irradiance map", "Light cache", "Caustics", "Default displacement", "RTEngine"];

const GroupBox = ({ title, items, marked, inset }: { title: string; items: Item[]; marked?: boolean; inset: number }) => (
  <Group>
    <Legend $inset={inset}>{title}</Legend>
    {items.map((it) => {
      const id = `${title}-${it.label}`;
      return (
        <Row key={id} $h={it.h ?? 10}>
          <label htmlFor={id}>{it.label}</label>
          <Controls>
            {it.off && <Check type="checkbox" aria-label={`${it.label} 启用`} />}
            {it.value !== undefined ? (
              <Spin $off={it.off}>
                <input id={id} defaultValue={it.value} disabled={it.off} />
                <Stepper aria-label={`${it.label} 调整`}>
                  <svg viewBox="0 0 5 7"><path d="M1 3l1.500-2L4 3zM1 4l1.500 2L4 4z" fill="#666" /></svg>
                </Stepper>
              </Spin>
            ) : it.swatch ? (
              <Swatch id={id}>I</Swatch>
            ) : (
              <Check id={id} type="checkbox" defaultChecked={it.on} />
            )}
          </Controls>
        </Row>
      );
    })}
    {marked && <CheckMark />}
  </Group>
);

const DropDown = ({ id, label, value }: { id: string; label?: string; value: string }) => (
  <SelectBox>
    <Select id={id} aria-label={label}><option>{value}</option></Select>
    <svg width="5" height="3" viewBox="0 0 5 3"><path d="M0 0h5L2.500 3z" fill="#222" /></svg>
  </SelectBox>
);

const OptionDialog = () => (
  <Dialog aria-label="V-Ray option editor">
    <DialogTitle>
      <DialogName><Icon n="r" s={8} />V-Ray option editor</DialogName>
      <div>
        <DialogButton>?</DialogButton>
        <DialogButton>x</DialogButton>
      </div>
    </DialogTitle>
    <Client>
      <DialogTools>
        <ToolSet names={["save", "open", "reset", "up", "down"]} />
        <label htmlFor="category">Presets:</label>
        <DropDown id="category" value="Choose Catego" />
        <DropDown id="preset" label="Preset" value="--Empty--" />
        <ToolSet names={["ok"]} />
      </DialogTools>
      <ScrollArea>
        <Accordion>
          <SectionButton>Global switches<HeaderMark /></SectionButton>
          <Switches>
            <Column>
              {leftGroups.map(([t, items], i) => <GroupBox key={t} title={t} items={items} marked={i === 1} inset={6} />)}
            </Column>
            <Column>
              {rightGroups.map(([t, items]) => <GroupBox key={t} title={t} items={items} inset={2} />)}
            </Column>
          </Switches>
          {sections.map((s) => <SectionButton key={s}>{s}</SectionButton>)}
        </Accordion>
        <ScrollBar>
          <svg viewBox="0 0 6 4"><path d="M0 4h6L3 0z" fill="#777" /></svg>
          <svg viewBox="0 0 6 4"><path d="M0 0h6L3 4z" fill="#777" /></svg>
        </ScrollBar>
      </ScrollArea>
    </Client>
  </Dialog>
);

const Deer = () => (
  <svg viewBox="66 134 140 190" aria-hidden="true">
    <path
      d="M76 163L96 170 104 165Q112 178 124 184L120 188 106 189Q100 198 102 212 108 228 132 230 164 232 180 240 190 248 190 262L182 268 190 292 188 317 174 317 178 292 162 268Q140 276 106 266L102 290 100 317 87 317 91 290 90 262Q68 238 68 218 72 204 82 194L80 178z"
      fill="#dcdcde"
    />
    <path d="M98 170Q98 155 106 146M104 164Q120 172 140 168 170 170 180 162 192 156 200 148M112 164Q104 152 112 144M124 166Q114 150 124 140M136 166Q128 154 134 146M150 168Q142 160 146 152M166 168Q158 162 160 156" fill="none" stroke="#dcdcde" strokeWidth="5" strokeLinecap="round" />
  </svg>
);

const Info = ({ c, t }: { c: string; t: string }) => (
  <svg viewBox="0 0 10 10" aria-hidden="true">
    <circle cx="5" cy="5" r="3.500" fill="none" stroke={c} />
    <path d={t} stroke={c} fill="none" />
  </svg>
);

const menus = ["文件(F)", "编辑(E)", "视图(V)", "相机(C)", "绘图(R)", "工具(T)", "窗口(W)", "扩展程序", "帮助(H)"];
const palette = [
  ["select", "component", "paint", "eraser"],
  ["pencil", "freehand", "rect", "rotrect", "circle", "polygon", "arc", "arc2", "arc3", "pie"],
  ["move", "push", "rotate", "follow", "scale", "offset"],
  ["tape", "dim", "protractor", "text", "axes", "text3d"],
  ["orbit", "pan", "zoom", "zoomwin", "extents", "prev"],
  ["position", "look", "walk", "section"],
];

export default function App() {
  return (
    <Window>
      <GlobalStyle />
      <TitleBar>
        <Icon n="logo" s={8} />
        <Title>无标题.skp - SketchUp Pro 2016</Title>
        <WindowButtons>
          <WindowButton aria-label="最小化"><svg width="7" height="3"><path d="M0 0h7v3H0z" fill="#fff" /></svg></WindowButton>
          <WindowButton aria-label="还原"><svg width="6" height="6"><path d="M1 1h4v4H1z" fill="none" stroke="#fff" /></svg></WindowButton>
          <WindowButton $close aria-label="关闭"><svg width="6" height="6"><path d="M1 1l4 4M5 1L1 5" stroke="#fff" strokeWidth="1.500" /></svg></WindowButton>
        </WindowButtons>
      </TitleBar>
      <MenuBar>{menus.map((m) => <MenuItem key={m}>{m}</MenuItem>)}</MenuBar>
      <ToolBar>
        <Grip />
        <Tools>
          <ToolSet names={["select", "eraser"]} active="select" />
          <Split><ToolSet names={["pencil"]} /><Caret /></Split>
          <Split><ToolSet names={["arcBar"]} /><Caret /></Split>
          <Split><ToolSet names={["rect"]} /><Caret /></Split>
        </Tools>
        <Divider />
        <Tools><ToolSet names={["push", "offset", "move", "rotate", "scale"]} /></Tools>
        <Divider />
        <Tools><ToolSet names={["tape", "text", "paint"]} /></Tools>
        <Divider />
        <Tools><ToolSet names={["orbit", "pan", "zoom", "extents"]} /></Tools>
        <Divider />
        <Tools><ToolSet names={["get", "share", "send"]} /></Tools>
        <Grip />
        <Tools><ToolSet names={["iso", "top", "front", "right", "back", "left"]} /></Tools>
        <Grip />
        <Tools><ToolSet names={["select", "component", "paint", "eraser"]} active="select" /></Tools>
        <Grip />
        <Tools><ToolSet names={["map", "terrain", "geo"]} /></Tools>
        <Grip />
        <Tools><ToolSet names={["m", "gear", "r", "rt", "br", "help", "tag", "sphere", "light", "tree", "treeRed", "plus", "pause"]} /></Tools>
        <Divider />
      </ToolBar>
      <Main>
        <Palette>
          <PaletteGrip />
          {palette.map((g, i) => (
            <PaletteGroup key={i}><ToolSet names={g} active="select" /></PaletteGroup>
          ))}
        </Palette>
        <Viewport><Model /></Viewport>
      </Main>
      <StatusBar>
        <StatusIcons>
          <Info c="#9a9a9e" t="M5 3v4" />
          <Info c="#2c2c30" t="M5 3v4M4 4h2" />
          <Info c="#8a8a8e" t="M3 6h4M5 3v2" />
        </StatusIcons>
        选择对象。切换到扩充选择。拖动鼠标选择多项。
      </StatusBar>
      <TaskBar><Task /><Task $lit /></TaskBar>
      <OptionDialog />
      <Watermark>
        <Deer />
        <BrandText>
          <BrandName><b>3D</b>溜溜网</BrandName>
          <BrandUrl>3D66.COM</BrandUrl>
        </BrandText>
      </Watermark>
      <Mascot>
        <svg viewBox="0 0 26 26" width="26" height="26" aria-hidden="true">
          <circle cx="13" cy="13" r="12" fill="#dfe7ee" stroke="#7fb0d4" strokeWidth="1.500" />
          <path d="M5 16q0-10 8-10t8 10q-2 6-8 6t-8-6z" fill="#b9bfc8" />
          <circle cx="10" cy="11" r="2.500" fill="#fff" /><circle cx="16" cy="11" r="2.500" fill="#fff" />
          <circle cx="10.500" cy="11" r="1" fill="#666" /><circle cx="15.500" cy="11" r="1" fill="#666" />
          <path d="M7 16q6 3 12 0-1 4-6 4t-6-4z" fill="#f2f4f6" />
        </svg>
      </Mascot>
      <SideTab />
    </Window>
  );
}
